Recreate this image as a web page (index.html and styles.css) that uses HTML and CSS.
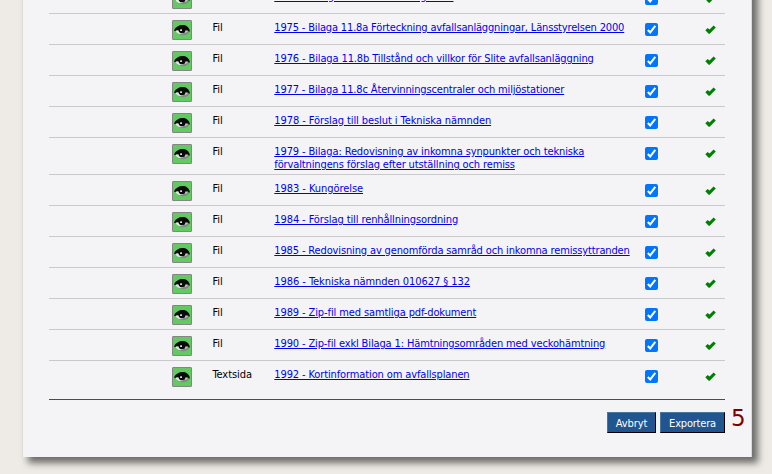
FILE: index.html
```html
<!DOCTYPE html>
<html lang="sv">
<head>
<meta charset="utf-8">
<title>Export</title>
<link rel="stylesheet" href="styles.css">
</head>
<body>
<svg width="0" height="0" class="defs" aria-hidden="true">
<defs>
<symbol id="eye" viewBox="0 0 16 12">
<path d="M1.500 6.500C3 9.500 5.500 11.300 9 11.300C12.500 11.300 14.800 9.500 15.500 7L13 4H3Z" fill="#7f8a80"/>
<path d="M1.300 6.500C2.200 8.800 4 9.900 6 10.300L9 9.500V5.500Z" fill="#e6e9e6"/>
<path d="M11 6.500L13.800 6.300C14 7.500 12.800 8.600 11 9Z" fill="#c4c8c4"/>
<path d="M0 6.200C1.500 3 5 1 8.500 1C12 1 15 2.900 15.800 6.600L15.300 8L13.800 6.600L11.500 6.300C11.300 8.300 9.900 9.300 8 9.300C6 9.300 4.700 8.200 4.400 6.200L2.500 6.300L1 7.200Z" fill="#080c08"/>
<rect x="6.200" y="5.300" width="1.700" height="1.700" fill="#f4f4f4"/>
</symbol>
<symbol id="check" viewBox="0 0 11 9"><path d="M.3 5.200L2.700 2.900L4.500 4.500L8.600 .4L10.800 2.400L4.700 8.700L3.700 8.700Z" fill="#008000"/></symbol>
<symbol id="tick" viewBox="0 0 13 13"><path d="M2.800 7L5.200 9.400L10.300 2.800" fill="none" stroke="#fff" stroke-width="2"/></symbol>
</defs>
</svg>
<main class="panel">
<div class="rows" id="rows"></div>
<div class="actions"><button>Avbryt</button><button class="export">Exportera</button><span class="step">5</span></div>
</main>
<script src="rows.js"></script>
</body>
</html>
```
FILE: rows.js
```js
// type, title, letter spacing in px
const items = [
  ["Fil", "1974 - Bilaga 11.7 Renhållningstaxa", 0],
  ["Fil", "1975 - Bilaga 11.8a Förteckning avfallsanläggningar, Länsstyrelsen 2000", -0.165],
  ["Fil", "1976 - Bilaga 11.8b Tillstånd och villkor för Slite avfallsanläggning", -0.12],
  ["Fil", "1977 - Bilaga 11.8c Återvinningscentraler och miljöstationer", -0.15],
  ["Fil", "1978 - Förslag till beslut i Tekniska nämnden", -0.08],
  ["Fil", "1979 - Bilaga: Redovisning av inkomna synpunkter och tekniska<br>förvaltningens förslag efter utställning och remiss", -0.125],
  ["Fil", "1983 - Kungörelse", -0.06],
  ["Fil", "1984 - Förslag till renhållningsordning", -0.1],
  ["Fil", "1985 - Redovisning av genomförda samråd och inkomna remissyttranden", -0.14],
  ["Fil", "1986 - Tekniska nämnden 010627 § 132", -0.06],
  ["Fil", "1989 - Zip-fil med samtliga pdf-dokument", -0.11],
  ["Fil", "1990 - Zip-fil exkl Bilaga 1: Hämtningsområden med veckohämtning", -0.13],
  ["Textsida", "1992 - Kortinformation om avfallsplanen", -0.12]
];
document.getElementById("rows").innerHTML = items.map(([type, title, spacing]) => `
<div class="row">
<span class="eye"><svg><use href="#eye"/></svg></span>
<span class="type">${type}</span>
<span class="title"><a href="#" style="letter-spacing:${spacing}px">${title}</a></span>
<svg class="box"><use href="#tick"/></svg>
<svg class="check"><use href="#check"/></svg>
</div>`).join("");
```
FILE: styles.css
```css
* { box-sizing: border-box; }
html, body { height: 474px; overflow: hidden; }
body { margin: 0; background: #eeebe6; font: 11px/13px "DejaVu Sans Condensed", "DejaVu Sans", sans-serif; font-stretch: condensed; color: #000; }
.defs { position: absolute; }
.panel { width: 730px; height: 477px; margin: -20px 0 0 22px; padding: 3px 26px 0; background: #f4f4f7; border-left: 1px solid #dfdcd8; border-right: 1px solid #dedbd7; box-shadow: 6px 6px 7px 0 #6c6c6a; }
.rows { width: 676px; border-bottom: 1px solid #20558f; }
.row { display: grid; grid-template-columns: 123px 40px 62px 371px 60px 20px; min-height: 31px; align-items: start; border-bottom: 1px solid #c9c9cc; padding-top: 6px; }
.row:last-child { min-height: 38px; border-bottom: 0; }
.eye { grid-column: 2; width: 20px; height: 20px; border: 1px solid #858585; border-radius: 1px; background: #63ca61; display: block; padding: 3px 1px; }
.eye svg { display: block; width: 16px; height: 12px; }
.type, .title { padding-top: 1px; white-space: nowrap; }
.type { padding-left: .4px; letter-spacing: -.05px; }
.title { padding-left: .3px; padding-bottom: 3px; }
.title a { color: #0000ee; text-decoration: underline; }
.box { width: 13px; height: 13px; margin-top: 3px; border-radius: 2px; background: #0075ff; }
.check { width: 11px; height: 9px; margin-top: 5px; }
.actions { display: flex; padding: 12px 0 0 558px; white-space: nowrap; }
button { flex: none; width: 49px; height: 21px; margin-right: 4px; padding: 1px 0 0; border: 1px solid; border-color: #47779f #000 #000 #47779f; background: #20558f; color: #fff; font: inherit; letter-spacing: -.1px; }
.export { width: 65px; margin-right: 6px; letter-spacing: -.2px; }
.step { color: #800000; font-family: "DejaVu Sans", sans-serif; font-stretch: normal; font-size: 23px; line-height: 13px; }
```
